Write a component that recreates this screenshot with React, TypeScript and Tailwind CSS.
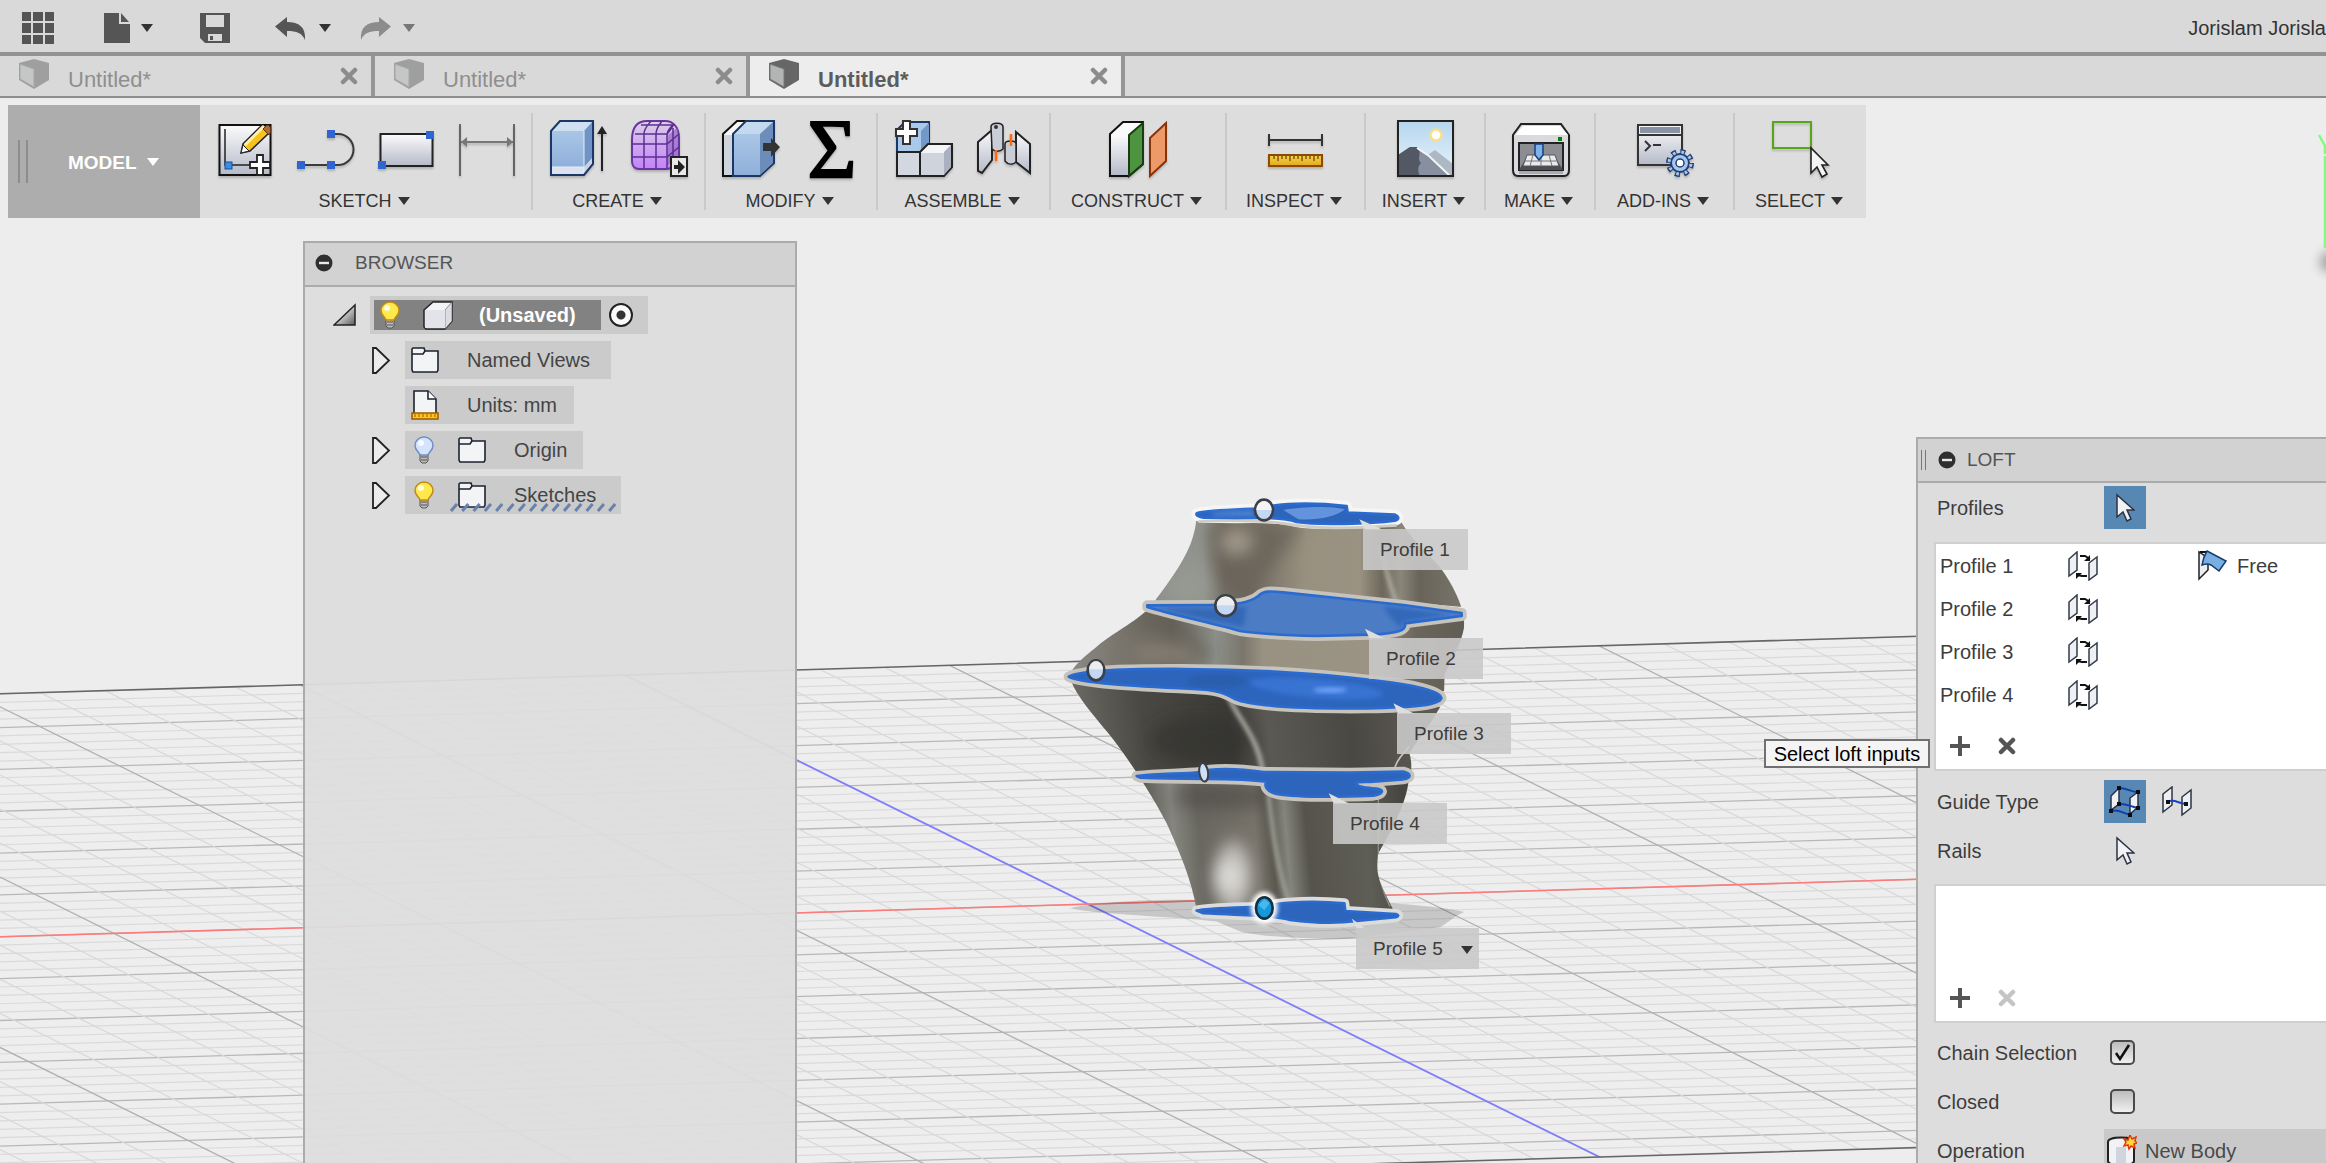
import type { ReactNode } from 'react';

// Size of the drawn part of the work plane
const GRID_ROWS = Array.from({ length: 62 }, (_, i) => i - 29);
const GRID_COLS = Array.from({ length: 75 }, (_, i) => i - 42);

const Caret = ({ className = 'text-[#333]' }: { className?: string }) => (
  <svg viewBox="0 0 12 8" className={`h-2 w-3 shrink-0 ${className}`}>
    <path d="M0 0h12L6 8z" fill="currentColor" />
  </svg>
);

const Cross = ({ className }: { className: string }) => (
  <svg viewBox="0 0 18 18" className={className}>
    <path d="M3 3l12 12M15 3L3 15" stroke="currentColor" strokeWidth="4.500" strokeLinecap="round" />
  </svg>
);

const Plus = () => (
  <svg viewBox="0 0 20 20" className="h-5 w-5 text-[#555]">
    <path d="M10 0v20M0 10h20" stroke="currentColor" strokeWidth="4" />
  </svg>
);

const Minus = () => (
  <svg viewBox="0 0 18 18" className="h-[18px] w-[18px] shrink-0">
    <circle cx="9" cy="9" r="8.5" fill="#2f2f2f" />
    <path d="M4 9h10" stroke="#e8e8e8" strokeWidth="2.4" />
  </svg>
);

const Gradients = () => (
  <svg className="absolute h-0 w-0" aria-hidden="true">
    <defs>
      <linearGradient id="steel" x1="0" y1="0" x2="0" y2="1">
        <stop offset="0" stopColor="#fbfbfc" />
        <stop offset="1" stopColor="#b5bac8" />
      </linearGradient>
      <linearGradient id="blueFace" x1="0" y1="0" x2="0" y2="1">
        <stop offset="0" stopColor="#a9c6e6" />
        <stop offset="1" stopColor="#8fb0da" />
      </linearGradient>
      <linearGradient id="purple" x1="0" y1="0" x2="0" y2="1">
        <stop offset="0" stopColor="#dcd0e8" />
        <stop offset="1" stopColor="#c382f8" />
      </linearGradient>
      <linearGradient id="gold" x1="0" y1="0" x2="0" y2="1">
        <stop offset="0" stopColor="#f6d34a" />
        <stop offset="1" stopColor="#e2a91c" />
      </linearGradient>
      <linearGradient id="sky" x1="0" y1="0" x2="0" y2="1">
        <stop offset="0" stopColor="#b5d6ee" />
        <stop offset="1" stopColor="#eaf5fc" />
      </linearGradient>
      <linearGradient id="expand" x1="0" y1="0" x2="1" y2="1">
        <stop offset="0.3" stopColor="#f0f0f0" />
        <stop offset="1" stopColor="#5a5a5a" />
      </linearGradient>
    </defs>
  </svg>
);

const ToolIcon = ({ label, children }: { label: string; children: ReactNode }) => (
  <button type="button" aria-label={label} className="flex w-[81px] justify-center">
    <svg viewBox="0 0 60 60" className="h-[60px] w-[60px] overflow-visible drop-shadow-[0_2px_1px_rgba(0,0,0,0.2)]">{children}</svg>
  </button>
);

const ToolGroup = ({ name, width, children }: { name: string; width: string; children: ReactNode }) => (
  <div className={`flex h-[97px] shrink-0 flex-col items-center border-r-2 border-[#c9c9c9] pt-[7px] last:border-0 ${width}`}>
    <div className="flex">{children}</div>
    <button type="button" className="mt-[9px] flex h-6 items-center gap-[6px] pr-[3px] text-[18px] leading-6 text-[#333]">
      {name}
      <Caret />
    </button>
  </div>
);

const Toolbar = () => (
  <div className="flex h-[113px] w-fit bg-[#ddd]">
    <button type="button" className="flex w-48 items-center bg-[#adadad] pl-[10px] text-[19px] font-bold text-white">
      <span className="h-[43px] w-[10px] border-x-2 border-[#8d8d8d]"></span>
      <span className="mr-[10px] ml-10 pt-[3px]">MODEL</span>
      <Caret className="text-white" />
    </button>
    <div className="flex pt-2">
      <ToolGroup name="SKETCH" width="w-[333px]">
        <ToolIcon label="Create sketch">
          <rect x="5.500" y="5" width="51" height="50" fill="url(#steel)" stroke="#111" strokeWidth="2" />
          <path d="M11 9v36h26" fill="none" stroke="#222" strokeWidth="1.500" />
          <rect x="11" y="42" width="7" height="7" fill="#3f8de0" stroke="#14509c" />
          <path d="M27 33l2-9L48 5l8 7-20 19z" fill="#f8c21c" stroke="#222" strokeWidth="1.500" />
          <path d="M31 25L50 6" stroke="#fff2a8" strokeWidth="3" />
          <path d="M27 33l2-8 6 6z" fill="#fff" stroke="#222" />
          <path d="M49 9l6 6c3-4 2-10-2-10z" fill="#b36b34" stroke="#5b3212" />
          <path d="M43 35h6v7h7v6h-7v7h-6v-7h-7v-6h7z" fill="#fff" stroke="#222" strokeWidth="1.800" />
        </ToolIcon>
        <ToolIcon label="Line">
          <path d="M36 14h7a15.500 15.500 0 0 1 0 31H6" fill="none" stroke="#3a3a3a" strokeWidth="2" />
          <rect x="2" y="41" width="8" height="8" fill="#2f66cf" />
          <rect x="32" y="41" width="8" height="8" fill="#2f66cf" />
          <rect x="32" y="10" width="8" height="8" fill="#2f66cf" />
        </ToolIcon>
        <ToolIcon label="Rectangle">
          <rect x="4.500" y="14" width="52" height="32" fill="url(#steel)" stroke="#222" strokeWidth="2" />
          <rect x="50" y="11" width="8" height="8" fill="#2f66cf" />
          <rect x="2" y="41" width="8" height="8" fill="#2f66cf" />
        </ToolIcon>
        <ToolIcon label="Sketch dimension">
          <path d="M3 4v52M57 4v52" stroke="#444" strokeWidth="1.500" />
          <path d="M4 22h52" stroke="#777" strokeWidth="1.800" />
          <path d="M4 22l6-5v10zM56 22l-6-5v10z" fill="#777" />
        </ToolIcon>
      </ToolGroup>

      <ToolGroup name="CREATE" width="w-[173px]">
        <ToolIcon label="Extrude">
          <path d="M3 11L12 1h33v43L36 55H3z" fill="#cfe0f2" />
          <path d="M36 11l9-10v43l-9 11z" fill="#6f93c4" />
          <rect x="3" y="11" width="33" height="36" fill="url(#blueFace)" />
          <path d="M3 47h33l9-10v7L36 55H3z" fill="#dfe3ee" opacity="0.800" />
          <path d="M4 47h31M36 11v44" stroke="#e5eef8" />
          <path d="M3 11L12 1h33v43L36 55H3z" fill="none" stroke="#1b3766" strokeWidth="2" />
          <path d="M54 51V10" stroke="#222" strokeWidth="2" />
          <path d="M54 6l5 8H49z" fill="#222" />
        </ToolIcon>
        <ToolIcon label="Create form">
          <path d="M3 20C3 8 8 1 18 1h18c9 0 14 7 14 17v18c0 5-6 13-13 13H10c-5 0-7-4-7-8z" fill="url(#purple)" stroke="#6a35a0" strokeWidth="2" />
          <path d="M39 15l10-8v28L38 46z" fill="#8d5cc0" opacity="0.600" />
          <path d="M3 24h35l12-10M3 37h35l12-10M6 14h31c3 0 6-7 8-10M12 5h33M15 48V14c0-6 5-10 7-13M27 48V14c0-6 4-10 6-13M38 48V16c0-6 3-8 6-11M44 42V8" fill="none" stroke="#5c2f91" strokeWidth="1.500" />
          <rect x="42" y="37" width="16" height="19" fill="#e8e8e8" stroke="#222" strokeWidth="2" />
          <path d="M45 45h4v-5l7 7-7 7v-5h-4z" fill="#222" />
        </ToolIcon>
      </ToolGroup>

      <ToolGroup name="MODIFY" width="w-[172px]">
        <ToolIcon label="Press pull">
          <path d="M2 14L16 1h22v55H2z" fill="#f7f7f8" stroke="#111" strokeWidth="2" />
          <path d="M3 15h9v40H3z" fill="#cfd3dc" />
          <path d="M12 14L25 1h28v42L39 56H12z" fill="#c4d9ef" stroke="#1b3766" strokeWidth="2" />
          <path d="M39 14L52 2v41L39 55z" fill="#6c8cba" />
          <rect x="13" y="14" width="26" height="41" fill="url(#blueFace)" />
          <path d="M42 23h8v-5l9 9-9 10v-6h-8z" fill="#333" />
        </ToolIcon>
        <ToolIcon label="Parameters">
          <text x="30" y="58" textAnchor="middle" fontSize="84" fontFamily="Liberation Serif, serif" fill="#000" stroke="#000" strokeWidth="2">Σ</text>
        </ToolIcon>
      </ToolGroup>

      <ToolGroup name="ASSEMBLE" width="w-[173px]">
        <ToolIcon label="New component">
          <path d="M4 10l8-8h24v22l-8 8H4z" fill="#a9c8ea" stroke="#1b3766" strokeWidth="2" />
          <path d="M28 11l8-8v21l-8 8z" fill="#7398ca" />
          <path d="M27 32l8-8h24v23l-8 9H27z" fill="#f4f5f7" stroke="#222" strokeWidth="2" />
          <path d="M51 32l7-7v22l-7 8z" fill="#aab0bf" />
          <rect x="28" y="33" width="23" height="22" fill="#cfd3dc" />
          <rect x="4" y="32" width="23" height="24" fill="#d3d7df" stroke="#222" strokeWidth="2" />
          <path d="M10 1h7v8h7v7h-7v8h-7v-8H3V9h7z" fill="#fff" stroke="#333" strokeWidth="2" />
        </ToolIcon>
        <ToolIcon label="Joint">
          <path d="M4 22L18 10v30L8 53l-4-2z" fill="url(#steel)" stroke="#222" strokeWidth="2" />
          <path d="M17 7c0-5 12-5 12 0v22c-3 3-8 3-11 0z" fill="#c9cdd7" stroke="#222" strokeWidth="1.500" />
          <circle cx="22" cy="7" r="2" fill="#333" />
          <path d="M22 30v11" stroke="#ff6a10" strokeWidth="2.500" />
          <path d="M42 12l14 12v29L42 42z" fill="url(#steel)" stroke="#222" strokeWidth="2" />
          <path d="M31 24c0-4 11-4 11 0v18c-3 3-8 3-11-1z" fill="#c9cdd7" stroke="#222" strokeWidth="1.500" />
          <path d="M37 14v12" stroke="#ff6a10" strokeWidth="2.500" />
        </ToolIcon>
      </ToolGroup>

      <ToolGroup name="CONSTRUCT" width="w-[176px]">
        <ToolIcon label="Offset plane">
          <path d="M2 14L15 2h20v42L21 56H2z" fill="#fafafa" stroke="#111" strokeWidth="2" />
          <rect x="3" y="15" width="18" height="40" fill="url(#steel)" />
          <path d="M21 15L35 3v41L21 56z" fill="#4e9440" stroke="#173d10" strokeWidth="2" />
          <path d="M42 18L58 3v38L42 56z" fill="#ee9a68" stroke="#8a3208" strokeWidth="2" />
        </ToolIcon>
      </ToolGroup>

      <ToolGroup name="INSPECT" width="w-[139px]">
        <ToolIcon label="Measure">
          <path d="M3 20h53M3 14v12M56 14v12" stroke="#333" strokeWidth="2" />
          <rect x="3" y="35" width="53" height="11" fill="url(#gold)" stroke="#8c4a08" strokeWidth="2" />
          <path d="M8 36v3M12 36v5M16 36v3M20 36v3M24 36v5M28 36v3M32 36v3M36 36v5M40 36v3M44 36v3M48 36v5M52 36v3" stroke="#6b3d05" strokeWidth="1.200" />
        </ToolIcon>
      </ToolGroup>

      <ToolGroup name="INSERT" width="w-[120px]">
        <ToolIcon label="Insert image">
          <rect x="3" y="1" width="55" height="55" fill="url(#sky)" />
          <circle cx="41" cy="15" r="5.500" fill="#fff" stroke="#f8e08b" strokeWidth="2.500" />
          <path d="M31 36l9-6 18 14v12H36z" fill="#adb8c5" />
          <path d="M3 35l12-8 6 1 15 10 19 18H3z" fill="#8790a0" />
          <path d="M3 35l12-8h7c6 7-1 11 4 16-4 4-3 9-1 13H3z" fill="#535865" />
          <path d="M22 28l12 8 20 19" fill="none" stroke="#f4f4f4" strokeWidth="2" />
          <rect x="3" y="1" width="55" height="55" fill="none" stroke="#222" strokeWidth="2" />
        </ToolIcon>
      </ToolGroup>

      <ToolGroup name="MAKE" width="w-[110px]">
        <ToolIcon label="3D print">
          <path d="M3 15L11 4h40l8 11v35c0 4-2 6-5 6H8c-3 0-5-2-5-6z" fill="#d8dade" stroke="#222" strokeWidth="2" />
          <path d="M5 15l8-9h37l8 9z" fill="#fff" />
          <rect x="48" y="17" width="4" height="4" fill="#0a7d14" />
          <rect x="9" y="23" width="44" height="27" fill="#8b8d92" stroke="#222" strokeWidth="2" />
          <path d="M9 50l9-15h26l9 15z" fill="#4b4d52" />
          <path d="M17 35h28l4 11H13z" fill="#e9eaec" stroke="#55575c" />
          <path d="M15 41h32M23 35l-3 11M31 35v11M39 35l3 11" stroke="#777" />
          <path d="M25 24h8v11l-4 5-4-5z" fill="#7fb2e6" stroke="#173f83" strokeWidth="1.500" />
          <rect x="9" y="51" width="44" height="3" fill="#a8abb2" />
        </ToolIcon>
      </ToolGroup>

      <ToolGroup name="ADD-INS" width="w-[139px]">
        <ToolIcon label="Scripts and add-ins">
          <rect x="3" y="5" width="44" height="40" fill="url(#steel)" stroke="#333" strokeWidth="2" />
          <rect x="5" y="7" width="40" height="6" fill="#8a93a5" />
          <path d="M3 15h44" stroke="#333" strokeWidth="2" />
          <path d="M10 21l5 5-5 5M18 25h8" fill="none" stroke="#333" strokeWidth="2" />
          <circle cx="45" cy="43" r="11" fill="none" stroke="#1f3f77" strokeWidth="6" strokeDasharray="4.700 3.940" />
          <circle cx="45" cy="43" r="9" fill="#a9c6ea" stroke="#1f3f77" strokeWidth="2" />
          <circle cx="45" cy="43" r="11" fill="none" stroke="#a9c6ea" strokeWidth="3" strokeDasharray="2.700 5.940" strokeDashoffset="-1" />
          <circle cx="45" cy="43" r="4" fill="#fff" stroke="#1f3f77" strokeWidth="1.500" />
        </ToolIcon>
      </ToolGroup>

      <ToolGroup name="SELECT" width="w-[131px]">
        <ToolIcon label="Select">
          <rect x="2" y="2" width="38" height="26" fill="none" stroke="#58a518" strokeWidth="2" />
          <path d="M40 28v25l6-6 5 10 5-3-5-9h6z" fill="#f5f5f7" stroke="#222" strokeWidth="1.600" />
        </ToolIcon>
      </ToolGroup>
    </div>
  </div>
);

const QuickAccess = () => (
  <header className="flex h-14 shrink-0 items-center overflow-hidden border-b-4 border-[#939393] bg-[#d9d9d9] pt-1 pl-[22px] text-[#555]">
    <button type="button" aria-label="Data panel" className="grid h-8 w-8 grid-cols-3 gap-[2px]">
      {Array.from({ length: 9 }, (_, i) => <span key={i} className="bg-[#555]"></span>)}
    </button>
    <button type="button" aria-label="File" className="ml-[50px] flex items-center gap-[11px]">
      <svg viewBox="0 0 26 30" className="h-[30px] w-[26px]">
        <path d="M0 0h15v11h11v19H0z" fill="currentColor" />
        <path d="M17 0l8 9h-8z" fill="currentColor" />
      </svg>
      <Caret />
    </button>
    <button type="button" aria-label="Save" className="ml-[47px]">
      <svg viewBox="0 0 30 30" className="h-[30px] w-[30px]">
        <path d="M0 0h30v30H5l-5-5z" fill="currentColor" />
        <rect x="6" y="2" width="18" height="12" fill="#d9d9d9" />
        <rect x="8" y="21" width="14" height="7" fill="#d9d9d9" />
        <rect x="10" y="23" width="3" height="4" fill="currentColor" />
      </svg>
    </button>
    <button type="button" aria-label="Undo" className="ml-[45px] flex items-center gap-3">
      <svg viewBox="0 0 32 23" className="h-[23px] w-8">
        <path d="M0 9.500L12 0v5c12 0 19 5 18 18-3-7-8-9-18-9v6z" fill="currentColor" />
      </svg>
      <Caret />
    </button>
    <button type="button" aria-label="Redo" className="ml-7 flex items-center gap-3 text-[#8c8c8c]">
      <svg viewBox="0 0 32 23" className="h-[23px] w-8">
        <path d="M32 9.500L20 0v5C8 5 1 10 2 23c3-7 8-9 18-9v6z" fill="currentColor" />
      </svg>
      <Caret className="text-[#777]" />
    </button>
    <span className="ml-auto text-[20px] whitespace-nowrap text-[#333]">Jorislam Jorisla</span>
  </header>
);

const DocTab = ({ active = false }: { active?: boolean }) => (
  <div className={`flex h-10 w-[375px] items-center border-r-4 border-[#969696] pl-[18px] ${active ? 'bg-[#ededed]' : 'bg-[#d9d9d9]'}`}>
    <svg viewBox="0 0 32 30" className={`mb-1 h-[30px] w-8 ${active ? '' : 'opacity-50'}`}>
      <path d="M1 4l15-4 15 4v17l-15 9L1 21z" fill="#666" />
      <path d="M2 5l14 5v18L2 20z" fill="#b3b5b5" stroke="#777" />
    </svg>
    <button type="button" className={`ml-[18px] pt-2 text-[22px] leading-6 ${active ? 'font-bold text-[#5c5c5c]' : 'text-[#8f8f8f]'}`}>
      Untitled*
    </button>
    <button type="button" aria-label="Close tab" className="mr-[13px] ml-auto">
      <Cross className="h-[18px] w-[18px] text-[#8c8c8c]" />
    </button>
  </div>
);

const Bulb = ({ on = false }: { on?: boolean }) => (
  <svg viewBox="0 0 20 28" className="h-7 w-5 shrink-0">
    <path d="M6 18h8v7l-2 2H8l-2-2z" fill="#bbb" stroke="#555" />
    <path d="M7 21h6M7 24h6" stroke="#555" />
    <path d="M10 1c-5 0-9 4-9 8.500 0 5 4 6 5 9.500h8c1-3.500 5-4.500 5-9.500C19 5 15 1 10 1z" fill={on ? '#ffe94d' : '#d5e4fd'} stroke={on ? '#c08a14' : '#6f8dc4'} strokeWidth="1.500" />
    <circle cx="7" cy="7" r="3" fill="#fff" opacity="0.800" />
  </svg>
);

const Folder = () => (
  <svg viewBox="0 0 28 26" className="h-[26px] w-7 shrink-0">
    <path d="M1 2l1-1h11l1 3h13v19l-1 2H2l-1-2z" fill="#f3f4f6" stroke="#1c2230" strokeWidth="1.600" />
    <path d="M1 7h11l2-3" fill="none" stroke="#1c2230" strokeWidth="1.600" />
  </svg>
);

const UnitsIcon = () => (
  <svg viewBox="0 0 28 30" className="h-[30px] w-7 shrink-0">
    <path d="M3 1h14l8 8v15H3z" fill="#f3f4f6" stroke="#1c2230" strokeWidth="1.600" />
    <path d="M17 1v8h8" fill="#fff" stroke="#1c2230" strokeWidth="1.600" />
    <rect x="1" y="23" width="26" height="6" fill="#ffc61a" stroke="#9a5a06" strokeWidth="1.500" />
    <path d="M4 24v3M8 24v3M12 24v3M16 24v3M20 24v3M24 24v3" stroke="#9a5a06" />
  </svg>
);

const TreeRow = ({ width, expandable = true, children }: { width: string; expandable?: boolean; children: ReactNode }) => (
  <li className="flex h-[38px] items-center pl-[66px]">
    <span className="w-[34px]">
      {expandable && (
        <button type="button" aria-label="Expand" className="block">
          <svg viewBox="0 0 20 27" className="h-[27px] w-5">
            <path d="M2 1h3l13 12.500L5 26H2z" fill="#ececec" stroke="#222" strokeWidth="1.800" />
          </svg>
        </button>
      )}
    </span>
    <div className={`relative flex h-full items-center bg-[#cbcbcb] ${width}`}>{children}</div>
  </li>
);

const BrowserPanel = () => (
  <section className="z-10 ml-[303px] flex w-[494px] flex-col border-2 border-b-0 border-[#ababab] bg-[#ddd]/95">
    <h2 className="flex h-11 items-center gap-[22px] border-b-2 border-[#ababab] bg-[#d2d2d2] pb-[2px] pl-[10px] text-[19px] text-[#555]">
      <Minus />
      BROWSER
    </h2>
    <ul className="flex flex-col gap-[7px] pt-[9px] text-[20px] text-[#444]">
      <li className="flex h-[38px] items-center pl-[28px]">
        <button type="button" aria-label="Collapse" className="mr-[13px]">
          <svg viewBox="0 0 24 24" className="h-6 w-6">
            <path d="M1 22L22 2v20z" fill="url(#expand)" stroke="#222" strokeWidth="1.500" />
          </svg>
        </button>
        <div className="flex h-full w-[278px] items-center bg-[#cbcbcb] pl-1">
          <div className="flex h-[30px] w-[227px] items-center bg-[#828282] pl-[6px] font-bold text-white">
            <Bulb on />
            <svg viewBox="0 0 30 29" className="mr-[26px] ml-[23px] h-[29px] w-[30px]">
              <path d="M1 9l9-8h19v19l-7 8H3l-2-2z" fill="#f4f4f6" stroke="#222" strokeWidth="1.500" />
              <path d="M22 9l7-8v19l-7 8z" fill="#dcdde2" stroke="#555" strokeWidth="0.600" />
              <rect x="2" y="9" width="20" height="18" fill="#e2e4e9" />
            </svg>
            (Unsaved)
          </div>
          <input type="radio" defaultChecked aria-label="Activate component" className="ml-2 h-6 w-6 appearance-none rounded-full border-2 border-[#222] bg-[radial-gradient(circle,#333_0_4px,#fafafa_5px)]" />
        </div>
      </li>
      <TreeRow width="w-[206px] pl-[6px]">
        <Folder />
        <span className="ml-7 whitespace-nowrap">Named Views</span>
      </TreeRow>
      <TreeRow width="w-[169px] pl-[6px]" expandable={false}>
        <UnitsIcon />
        <span className="ml-7">Units: mm</span>
      </TreeRow>
      <TreeRow width="w-[178px] pl-[9px]">
        <Bulb />
        <span className="ml-6"><Folder /></span>
        <span className="ml-7">Origin</span>
      </TreeRow>
      <TreeRow width="w-[216px] pl-[9px]">
        <Bulb on />
        <span className="ml-6"><Folder /></span>
        <span className="ml-7">Sketches</span>
        <svg viewBox="0 0 168 9" className="absolute bottom-[2px] left-[45px] h-[9px] w-[168px]">
          {Array.from({ length: 15 }, (_, i) => (
            <path key={i} d={`M${i * 11.3 + 1} 8l6-7`} stroke="#6682ad" strokeWidth="3" />
          ))}
        </svg>
      </TreeRow>
    </ul>
  </section>
);

const Cursor = () => (
  <svg viewBox="0 0 20 30" className="h-[30px] w-5">
    <path d="M2 2v22l6-5 4 9 4-2-4-9h7z" fill="#f1f2f5" stroke="#2c3342" strokeWidth="1.500" />
  </svg>
);

const FlipIcon = () => (
  <svg viewBox="0 0 30 30" className="h-[30px] w-[30px]">
    <path d="M1 8l8-7v18l-8 6zM21 12l8-6v17l-8 6z" fill="#eef0f4" stroke="#333b4b" strokeWidth="1.500" />
    <path d="M12 5h5l5 3M19 25h-5l-5-1" fill="none" stroke="#111" strokeWidth="2" />
    <path d="M22 4v6h-6zM8 28v-6h6z" fill="#111" />
  </svg>
);

const ListActions = ({ dim = false }: { dim?: boolean }) => (
  <div className="mt-auto flex gap-7 pb-[13px] pl-[14px]">
    <button type="button" aria-label="Add"><Plus /></button>
    <button type="button" aria-label="Remove">
      <Cross className={dim ? 'h-[18px] w-[18px] text-[#c4c4c4]' : 'h-[18px] w-[18px] text-[#555]'} />
    </button>
  </div>
);

const Field = ({ label, id, children }: { label: string; id: string; children: ReactNode }) => (
  <div className="flex h-[49px] items-center">
    <label htmlFor={id} className="w-[167px] shrink-0">{label}</label>
    {children}
  </div>
);

const Check = ({ id, checked = false }: { id: string; checked?: boolean }) => (
  <span className="relative ml-[6px] h-[25px] w-[25px]">
    <input id={id} type="checkbox" defaultChecked={checked} className="peer block h-[25px] w-[25px] appearance-none rounded-[5px] border-2 border-[#4a4a4a] bg-linear-to-b from-[#bdbdbd] to-[#f0f0f0]" />
    <svg viewBox="0 0 25 25" className="pointer-events-none absolute inset-0 hidden peer-checked:block">
      <path d="M6 13l4 6L19 5" fill="none" stroke="#111" strokeWidth="2.600" />
    </svg>
  </span>
);

const LoftPanel = () => (
  <section className="relative z-10 mt-[196px] ml-auto flex w-[410px] flex-col border-t-2 border-l-2 border-[#ababab] bg-[#ddd] text-[20px] text-[#3d3d3d]">
    <h2 className="flex h-11 shrink-0 items-center border-b-2 border-[#ababab] bg-[#d2d2d2] pl-[3px] text-[19px] text-[#555]">
      <span className="h-5 w-[5px] border-x border-[#777]"></span>
      <span className="mr-[11px] ml-[12px]"><Minus /></span>
      LOFT
    </h2>
    <div className="pl-[19px]">
      <Field label="Profiles" id="profiles">
        <button id="profiles" type="button" className="flex h-[43px] w-[42px] items-center justify-center bg-[#5788b3]">
          <Cursor />
        </button>
      </Field>
      <div className="-ml-[3px] mt-[10px] flex h-[229px] flex-col border-2 border-r-0 border-[#d0d0d0] bg-white">
        <ul>
          {[1, 2, 3, 4].map(n => (
            <li key={n} className="flex h-[43px] items-center pl-1">
              <span className="w-[128px]">Profile {n}</span>
              <FlipIcon />
              {n === 1 && (
                <span className="ml-[100px] flex items-center gap-[9px]">
                  <svg viewBox="0 0 30 31" className="h-[31px] w-[30px]">
                    <path d="M1 2v27l9-9V8z" fill="#eceef2" stroke="#222" strokeWidth="1.500" />
                    <path d="M2 2h9" stroke="#111" strokeWidth="2" />
                    <path d="M9 1l19 10-7 10-8-6c-4-2-6-1-9 0 1-7 2-9 5-14z" fill="#79aee3" stroke="#163a6e" strokeWidth="1.500" />
                  </svg>
                  Free
                </span>
              )}
            </li>
          ))}
        </ul>
        <ListActions />
      </div>
      <div className="mt-[6px]">
        <Field label="Guide Type" id="guide">
          <button id="guide" type="button" aria-label="Rails" className="flex h-[43px] w-[42px] items-center justify-center bg-[#5788b3]">
            <svg viewBox="0 0 32 31" className="h-[31px] w-8">
              <path d="M2 10l8-8v16l-8 6zM21 12l8-6v15l-8 7z" fill="#eef0f4" stroke="#26324a" strokeWidth="1.500" />
              <path d="M10 2c8 0 12 4 19 4M10 18c7-1 12 3 19 4M2 25c7-2 12 2 19 4" fill="none" stroke="#123db0" strokeWidth="2" />
              <path d="M8 0h4v4H8zM27 4h4v4h-4zM8 16h4v4H8zM27 20h4v4h-4zM0 23h4v4H0zM19 27h4v4h-4z" fill="#0c0c14" />
            </svg>
          </button>
          <button type="button" aria-label="Centerline" className="ml-4">
            <svg viewBox="0 0 30 31" className="h-[31px] w-[30px]">
              <path d="M1 8l9-7v18l-9 7zM20 11l9-7v18l-9 7z" fill="#eef0f4" stroke="#2c3342" strokeWidth="1.500" />
              <path d="M5 16c7-4 12 2 19 2" fill="none" stroke="#1742c4" strokeWidth="2" />
              <path d="M4 14h4v4H4zM22 16h4v4h-4z" fill="#111" />
            </svg>
          </button>
        </Field>
        <Field label="Rails" id="rails">
          <button id="rails" type="button" className="flex h-[43px] w-[42px] items-center justify-center"><Cursor /></button>
        </Field>
      </div>
      <div className="-ml-[3px] mt-[9px] flex h-[139px] flex-col border-2 border-r-0 border-[#d0d0d0] bg-white">
        <ListActions dim />
      </div>
      <div className="mt-[5px]">
        <Field label="Chain Selection" id="chain"><Check id="chain" checked /></Field>
        <Field label="Closed" id="closed"><Check id="closed" /></Field>
        <Field label="Operation" id="operation">
          <div className="flex h-[43px] flex-1 items-center bg-[#c9c9c9] pl-[3px]">
            <svg viewBox="0 0 30 32" className="h-8 w-[30px] shrink-0">
              <path d="M1 7c0-6 26-6 26 0v19c0 6-26 6-26 0z" fill="#f1f2f5" stroke="#222" strokeWidth="2" />
              <path d="M9 12h10v18H9z" fill="#d0d4dd" />
              <path d="M23 0l2 4 4-2-1 4 2 2-3 1 1 4-4-2-2 3-1-4-4 1 2-4-2-3 4 1z" fill="#ffd83a" stroke="#e0380c" strokeWidth="1.500" />
            </svg>
            <select id="operation" className="w-full appearance-none bg-transparent pl-2 text-[20px] text-[#4a4a4a]">
              <option>New Body</option>
            </select>
          </div>
        </Field>
      </div>
    </div>
    <div role="tooltip" className="absolute top-[300px] -left-[154px] flex h-[29px] w-[166px] items-center justify-center border-2 border-[#707070] bg-[#f4f4f4] text-[20px] whitespace-nowrap text-black">
      Select loft inputs
    </div>
  </section>
);

// Loft sections, top to bottom
const SECTIONS = [
  'M440 100C460 90 560 90 640 84 680 70 780 66 890 78L893 98 1035 104C1048 110 1048 118 1035 122 960 132 800 136 740 126 700 113 640 113 560 115L460 113C445 110 437 106 440 100Z',
  'M292 376L480 375C560 375 600 368 625 348 640 332 660 333 700 337L1060 375 1235 399V408L1065 430C1070 450 1050 460 960 464L800 468C700 466 620 460 570 453 500 433 350 400 292 381Z',
  'M56 590C90 572 200 566 400 567 700 568 900 592 1020 607 1120 620 1178 640 1174 655 1168 675 1100 682 950 685 700 687 590 672 555 657 520 638 500 630 430 627 250 618 90 610 56 590Z',
  'M260 888C330 880 400 882 450 876 480 864 560 864 640 876L900 878 1060 875C1085 881 1085 894 1060 898L960 906C900 903 905 920 980 926 1006 930 998 943 970 947 850 952 740 952 680 942 644 933 644 915 649 905 560 893 450 900 270 893Z',
  'M440 1292C470 1283 560 1283 640 1280 700 1264 800 1262 883 1270L886 1293 1038 1302C1047 1305 1047 1309 1038 1312L920 1323C850 1333 780 1328 720 1320 680 1308 600 1306 460 1300Z',
];

const Model = () => (
  <g transform="translate(1050 480) scale(0.3333)">
    <defs>
      <clipPath id="body">
        <path d="M440 95C440 180 400 250 320 355 290 410 200 450 140 500 90 540 50 575 62 600 80 650 130 705 175 760 240 840 320 970 350 1030 390 1120 425 1200 440 1290L1030 1290C990 1210 975 1190 985 1120 1020 1060 1065 980 1075 910 1088 870 1085 840 1078 820 1110 770 1150 720 1165 690 1190 660 1180 610 1185 580 1215 520 1243 470 1243 430 1243 380 1200 290 1150 240 1110 200 1060 150 1045 105Z" />
      </clipPath>
      <clipPath id="s1"><path d="M0 60H1400V395L700 335 600 370H0Z" /></clipPath>
      <clipPath id="s2"><path d="M0 370H600L700 335 1400 400V660L900 600 400 570H0Z" /></clipPath>
      <clipPath id="s3"><path d="M0 590L500 640 700 680H1400V890H0Z" /></clipPath>
      <clipPath id="s4"><path d="M0 890H1400V1340H0Z" /></clipPath>
      <linearGradient id="top" gradientUnits="userSpaceOnUse" x1="300" y1="0" x2="1240" y2="0">
        <stop offset="0" stopColor="#8c8f8a" />
        <stop offset="0.170" stopColor="#92958f" />
        <stop offset="0.240" stopColor="#777168" />
        <stop offset="0.380" stopColor="#807a6e" />
        <stop offset="0.500" stopColor="#999180" />
        <stop offset="0.670" stopColor="#9a9282" />
        <stop offset="0.740" stopColor="#6e685c" />
        <stop offset="0.800" stopColor="#8b867a" />
        <stop offset="0.860" stopColor="#69645a" />
        <stop offset="1" stopColor="#7a756a" />
      </linearGradient>
      <linearGradient id="mid" gradientUnits="userSpaceOnUse" x1="60" y1="0" x2="1240" y2="0">
        <stop offset="0" stopColor="#8b8a84" />
        <stop offset="0.120" stopColor="#7a766d" />
        <stop offset="0.260" stopColor="#68645b" />
        <stop offset="0.370" stopColor="#8c908a" />
        <stop offset="0.440" stopColor="#7b766c" />
        <stop offset="0.490" stopColor="#999182" />
        <stop offset="0.780" stopColor="#9b9383" />
        <stop offset="0.880" stopColor="#6b665c" />
        <stop offset="1" stopColor="#625d54" />
      </linearGradient>
      <linearGradient id="dark" gradientUnits="userSpaceOnUse" x1="80" y1="780" x2="1100" y2="660">
        <stop offset="0" stopColor="#6b6963" />
        <stop offset="0.200" stopColor="#494843" />
        <stop offset="0.450" stopColor="#3b3a36" />
        <stop offset="0.560" stopColor="#5b5953" />
        <stop offset="0.800" stopColor="#4a4842" />
        <stop offset="1" stopColor="#5b5952" />
      </linearGradient>
      <linearGradient id="low" gradientUnits="userSpaceOnUse" x1="300" y1="1120" x2="1060" y2="1050">
        <stop offset="0" stopColor="#5d5c55" />
        <stop offset="0.100" stopColor="#85867f" />
        <stop offset="0.200" stopColor="#69675f" />
        <stop offset="0.420" stopColor="#77736a" />
        <stop offset="0.480" stopColor="#5b5850" />
        <stop offset="0.540" stopColor="#84857c" />
        <stop offset="0.620" stopColor="#55534c" />
        <stop offset="0.850" stopColor="#5e5d56" />
        <stop offset="1" stopColor="#474640" />
      </linearGradient>
      <filter id="soft" x="-100%" y="-100%" width="300%" height="300%"><feGaussianBlur stdDeviation="24" /></filter>
      <filter id="fine" x="-50%" y="-50%" width="200%" height="200%"><feGaussianBlur stdDeviation="6" /></filter>
    </defs>

    <path d="M60 1285C150 1265 300 1258 450 1260L1020 1270C1100 1275 1200 1285 1243 1296 1220 1305 1190 1330 1170 1342L900 1375C780 1378 600 1370 560 1350L500 1325C380 1310 150 1305 60 1285Z" fill="#000" opacity="0.160" />

    <g clipPath="url(#body)">
      <g clipPath="url(#s1)">
        <rect width="1400" height="420" fill="url(#top)" />
        <path d="M470 130C480 260 520 330 560 380L640 370C600 300 700 240 760 130Z" fill="#655f55" filter="url(#soft)" opacity="0.700" />
        <ellipse cx="560" cy="185" rx="50" ry="40" fill="#a0988a" filter="url(#soft)" />
        <ellipse cx="410" cy="320" rx="60" ry="60" fill="#969993" filter="url(#soft)" />
        <path d="M990 200C1010 280 1030 350 1052 400" fill="none" stroke="#d3d0c6" strokeWidth="7" filter="url(#fine)" />
      </g>
      <g clipPath="url(#s2)">
        <rect y="330" width="1400" height="340" fill="url(#mid)" />
        <ellipse cx="350" cy="520" rx="110" ry="30" fill="#857e72" filter="url(#soft)" />
        <path d="M260 420C340 410 400 440 470 540" fill="none" stroke="#5f5b53" strokeWidth="40" filter="url(#soft)" opacity="0.600" />
      </g>
      <g clipPath="url(#s3)">
        <rect y="580" width="1400" height="320" fill="url(#dark)" />
        <ellipse cx="450" cy="780" rx="150" ry="70" fill="#33322e" filter="url(#soft)" opacity="0.600" />
        <path d="M530 640C570 730 620 760 640 880" fill="none" stroke="#b9b8ae" strokeWidth="12" filter="url(#fine)" />
        <path d="M1078 800C1050 830 1035 850 1030 880" fill="none" stroke="#c4c2b8" strokeWidth="5" />
      </g>
      <g clipPath="url(#s4)">
        <rect y="880" width="1400" height="460" fill="url(#low)" />
        <ellipse cx="520" cy="950" rx="150" ry="40" fill="#4c4a44" filter="url(#soft)" opacity="0.600" />
        <ellipse cx="550" cy="1190" rx="55" ry="110" fill="#bab7b3" filter="url(#soft)" />
        <ellipse cx="540" cy="1190" rx="36" ry="50" fill="#dddbd9" filter="url(#soft)" />
        <path d="M655 940C665 1040 680 1160 715 1260" fill="none" stroke="#a2a49a" strokeWidth="12" filter="url(#fine)" />
        <path d="M985 950V1120C980 1190 1000 1240 1020 1280" fill="none" stroke="#8f8e86" strokeWidth="4" />
      </g>
    </g>

    {SECTIONS.map((d, i) => (
      <g key={i}>
        <path d={d} fill="none" stroke={i === 0 ? '#f6f6f5' : i === 4 ? '#dcdcda' : '#c6c3bc'} strokeWidth="30" strokeLinejoin="round" />
        <path d={d} fill={i === 1 ? '#4b7cc4' : '#2d65bd'} stroke="#2b6bd0" strokeWidth="8" strokeLinejoin="round" />
      </g>
    ))}
    <path d="M445 125C520 120 640 122 700 130 800 148 900 146 1040 136" fill="none" stroke="#cfccc4" strokeWidth="8" />

    {/* Shading seen through the translucent sections */}
    <path d="M700 90C760 78 850 78 885 88 860 110 800 122 745 118Z" fill="#6393dd" />
    <path d="M480 100C530 92 580 92 610 92V108H500Z" fill="#4f83d2" filter="url(#fine)" />
    <path d="M330 384L500 386 590 380 580 440C500 425 400 405 330 384Z" fill="#2c60b2" opacity="0.700" filter="url(#fine)" />
    <path d="M1000 380C1020 410 1040 430 1050 445L1060 425 1200 404 1060 385Z" fill="#235cb4" opacity="0.600" filter="url(#fine)" />
    <ellipse cx="800" cy="625" rx="200" ry="28" fill="#3f7de0" filter="url(#fine)" opacity="0.600" transform="rotate(5 800 625)" />
    <ellipse cx="840" cy="630" rx="50" ry="7" fill="#78aaff" filter="url(#fine)" />
    <ellipse cx="500" cy="603" rx="90" ry="20" fill="#28589f" filter="url(#fine)" opacity="0.500" />

    <ellipse cx="642" cy="90" rx="27" ry="31" fill="#c4d8f4" stroke="#3a3f4a" strokeWidth="8" />
    <path d="M619 90a23 27 0 0 1 46 0z" fill="#f3f3f3" />
    <ellipse cx="527" cy="377" rx="31" ry="31" fill="#c4d8f4" stroke="#3a3f4a" strokeWidth="8" />
    <path d="M500 376a27 27 0 0 1 54 0z" fill="#eee" />
    <ellipse cx="138" cy="571" rx="25" ry="30" fill="#c4d8f4" stroke="#3a3f4a" strokeWidth="8" />
    <path d="M117 568a21 25 0 0 1 42 0z" fill="#eee" />
    <ellipse cx="461" cy="877" rx="13" ry="28" fill="#cddff5" stroke="#3a3f4a" strokeWidth="6" transform="rotate(-8 461 877)" />
    <ellipse cx="643" cy="1284" rx="40" ry="48" fill="#fff" filter="url(#fine)" />
    <ellipse cx="643" cy="1284" rx="25" ry="32" fill="#1597da" stroke="#12303f" strokeWidth="8" />
    <path d="M625 1275l18-18 16 12-16 22z" fill="#45b8ee" />

    {/* Callout tails */}
    <path d="M928 118L1000 150H945ZM945 446L1010 478H960ZM1030 670L1095 702H1045ZM836 940L900 972H852ZM905 1316L945 1346H920Z" fill="#dedede" />
  </g>
);

const Viewport = () => (
  <svg viewBox="0 98 2326 1065" className="absolute top-0 left-0 h-[1065px] w-[2326px] max-w-none">
    <defs>
      <clipPath id="plane"><path d="M0 693.800L2326 624V1136L0 1204Z" /></clipPath>
      <filter id="cubeShadow" x="-100%" y="-100%" width="300%" height="300%"><feGaussianBlur stdDeviation="6" /></filter>
    </defs>
    <g clipPath="url(#plane)">
      <rect y="600" width="2326" height="600" fill="#eee" />
      {GRID_ROWS.map(k => (
        <path key={k} d={`M0 ${936.8 + k * 8.37}l2326 -69.8`} stroke={k % 5 === 0 ? '#b8b8b8' : '#dadada'} strokeWidth={k % 5 === 0 ? 1.3 : 1.2} />
      ))}
      {GRID_COLS.map(k => (
        <path key={k} d={`M0 ${366.2 + k * 34.06}l2326 1150`} stroke={k % 5 === 0 ? '#b0b0b0' : '#d8d8d8'} strokeWidth={k % 5 === 0 ? 1.3 : 1.2} />
      ))}
      <path d="M0 366.200l2326 1150" stroke="#8080ff" strokeWidth="1.800" />
    </g>
    <path d="M0 693.800l2326 -69.800M0 1204.500l2326 -69" stroke="#666" strokeWidth="1.600" />
    <path d="M0 936.800l2326 -69.800" stroke="#ff7a7a" strokeWidth="1.600" />
    <Model />
    {/* View cube edge */}
    <ellipse cx="2330" cy="262" rx="10" ry="10" fill="#000" opacity="0.350" filter="url(#cubeShadow)" />
    <path d="M2319 135l6 11v8M2325 156v92" fill="none" stroke="#7dff7d" strokeWidth="2.500" />
  </svg>
);

const CALLOUTS = [
  { name: 'Profile 1', place: 'left-[1363px] top-[431px] w-[105px]' },
  { name: 'Profile 2', place: 'left-[1369px] top-[540px] w-[114px]' },
  { name: 'Profile 3', place: 'left-[1397px] top-[615px] w-[114px]' },
  { name: 'Profile 4', place: 'left-[1333px] top-[705px] w-[114px]' },
  { name: 'Profile 5', place: 'left-[1356px] top-[830px] w-[123px]', menu: true },
];

export default function App() {
  return (
    <div className="relative flex h-screen flex-col overflow-hidden bg-[#ededed] font-['Liberation_Sans',Arial,sans-serif]">
      <Gradients />
      <QuickAccess />
      <nav className="flex h-[42px] shrink-0 border-b-2 border-[#8e8e8e] bg-[#d9d9d9]">
        <DocTab />
        <DocTab />
        <DocTab active />
      </nav>
      <main className="relative flex min-h-0 flex-1 flex-col overflow-hidden">
        <Viewport />
        {CALLOUTS.map(c => (
          <button key={c.name} type="button" className={`absolute flex h-[41px] items-center bg-[#c9c9c9]/90 pt-[2px] pl-[17px] text-[19px] whitespace-nowrap text-[#3d3d3d] ${c.place}`}>
            {c.name}
            {c.menu && <span className="ml-[18px]"><Caret /></span>}
          </button>
        ))}
        <div className="z-10 pt-[7px] pl-2">
          <Toolbar />
        </div>
        <div className="mt-[23px] flex min-h-0 flex-1">
          <BrowserPanel />
          <LoftPanel />
        </div>
      </main>
    </div>
  );
}
